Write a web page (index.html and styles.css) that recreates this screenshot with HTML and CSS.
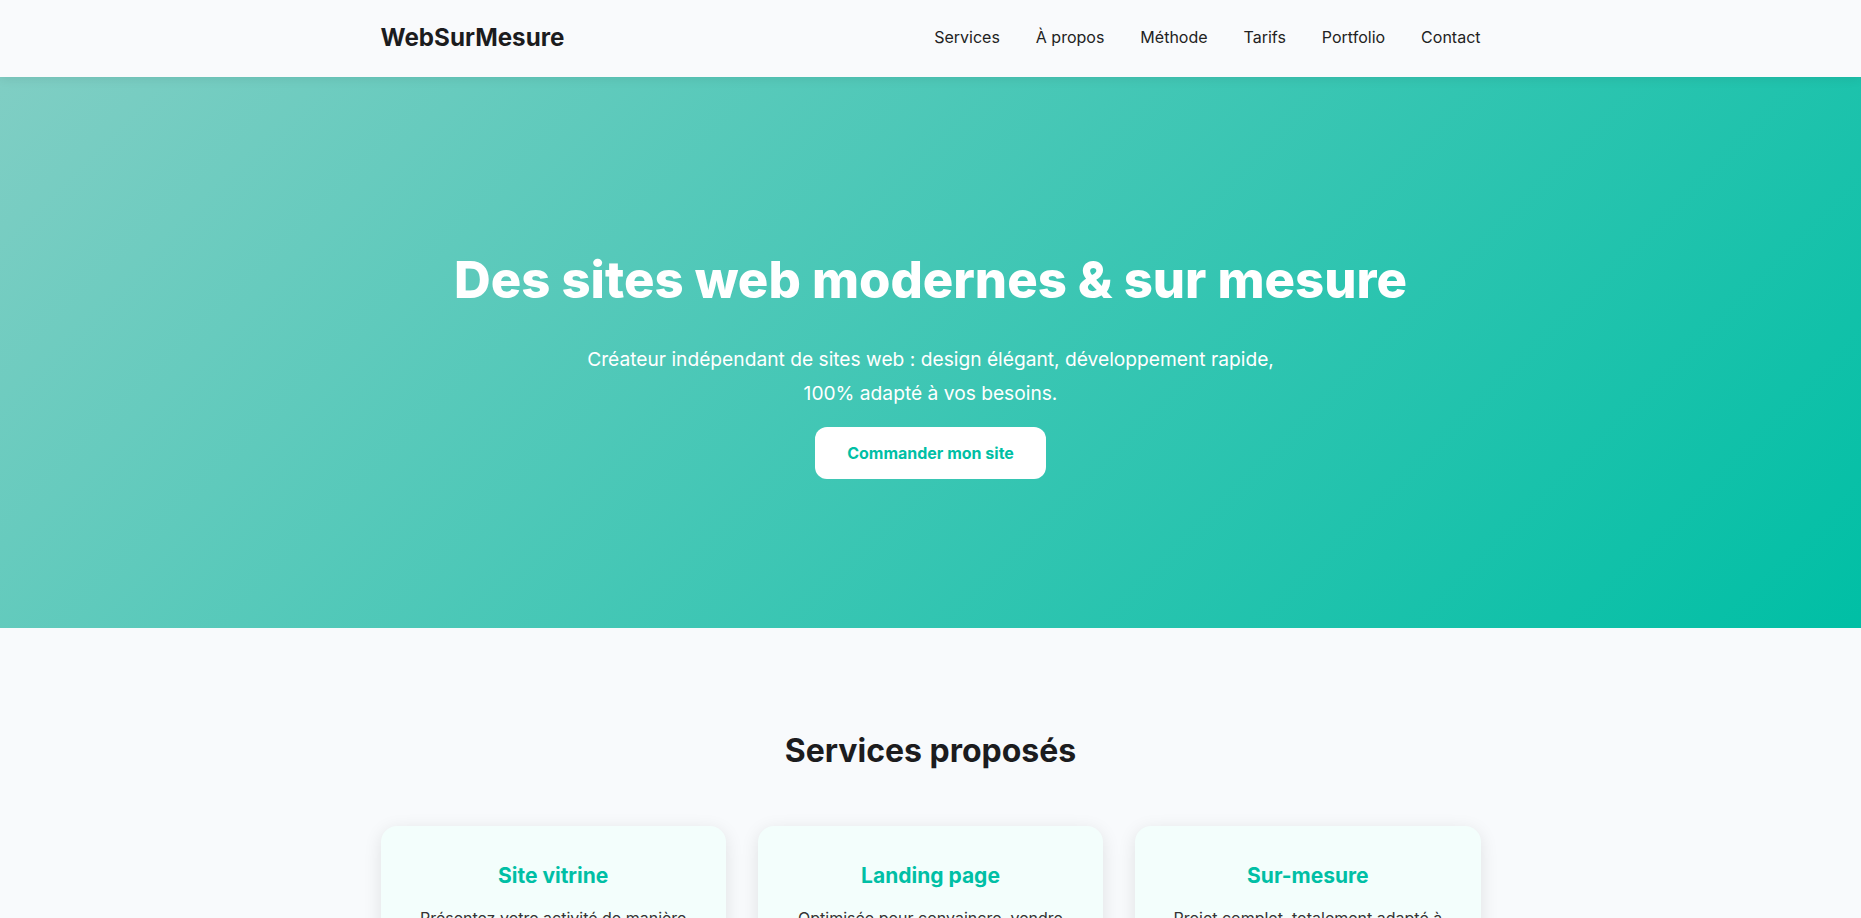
FILE: index.html
```html
<!DOCTYPE html>
<html lang="fr">
<head>
<meta charset="utf-8">
<title>WebSurMesure</title>
<link rel="stylesheet" href="styles.css">
</head>
<body>
<header class="site-header">
  <div class="container header-inner">
    <div class="logo">WebSurMesure</div>
    <nav class="nav">
      <a href="#">Services</a>
      <a href="#">À propos</a>
      <a href="#">Méthode</a>
      <a href="#">Tarifs</a>
      <a href="#">Portfolio</a>
      <a href="#">Contact</a>
    </nav>
  </div>
</header>
<section class="hero">
  <h1 class="hero-title">Des sites web modernes &amp; sur mesure</h1>
  <p class="hero-sub">Créateur indépendant de sites web : design élégant, développement rapide, 100% adapté à vos besoins.</p>
  <a class="hero-btn" href="#">Commander mon site</a>
</section>
<section class="services">
  <div class="container">
    <h2 class="section-title">Services proposés</h2>
    <div class="cards">
      <div class="card">
        <h3 class="card-title">Site vitrine</h3>
        <p class="card-text">Présentez votre activité de manière professionnelle et élégante sur le web.</p>
      </div>
      <div class="card">
        <h3 class="card-title">Landing page</h3>
        <p class="card-text">Optimisée pour convaincre, vendre efficacement et capter des prospects.</p>
      </div>
      <div class="card">
        <h3 class="card-title">Sur-mesure</h3>
        <p class="card-text">Projet complet, totalement adapté à vos besoins spécifiques et à votre image.</p>
      </div>
    </div>
  </div>
</section>
</body>
</html>
```
FILE: styles.css
```css
* { box-sizing: border-box; }
html, body { margin: 0; padding: 0; }
body {
  font-family: Inter, "Noto Sans", sans-serif;
  background: #f8fafc;
  color: #1e1e1e;
}
.container {
  max-width: 1100px;
  margin: 0 auto;
}
.site-header {
  position: relative;
  z-index: 2;
  background: #f9fafc;
  box-shadow: 0 2px 10px rgba(0,0,0,0.08);
}
.header-inner {
  height: 77px;
  padding-bottom: 3px;
  display: flex;
  align-items: center;
  justify-content: space-between;
}
.logo {
  font-size: 24.2px;
  font-weight: 700;
  color: #1c1c1e;
}
.nav {
  display: flex;
  gap: 36px;
}
.nav a {
  color: #222;
  text-decoration: none;
  font-size: 16px;
}
.hero {
  background: linear-gradient(135deg, #80cec4 0%, #00bfa5 100%);
  color: #fff;
  text-align: center;
  padding: 173px 20px 149px;
  display: flex;
  flex-direction: column;
  align-items: center;
}
.hero-title {
  margin: 0 0 33px;
  font-size: 50.8px;
  line-height: 60px;
  font-weight: 800;
}
.hero-sub {
  margin: 0 0 17px;
  max-width: 700px;
  font-size: 19.2px;
  line-height: 1.75;
}
.hero-btn {
  display: inline-block;
  background: #fff;
  color: #00bfa5;
  font-weight: 700;
  font-size: 16px;
  line-height: 20px;
  padding: 16px 32px;
  border-radius: 12px;
  text-decoration: none;
}
.services {
  padding: 104px 0 80px;
}
.section-title {
  margin: 0 0 56px;
  text-align: center;
  font-size: 32px;
  line-height: 38px;
  font-weight: 700;
  color: #1c1c1e;
}
.cards {
  display: grid;
  grid-template-columns: repeat(3, 1fr);
  gap: 32px;
}
.card {
  background: #f3fefc;
  border-radius: 16px;
  padding: 34px 32px 32px;
  text-align: center;
  box-shadow: 0 4px 18px rgba(0,0,0,0.1);
}
.card-title {
  margin: 0 0 15px;
  color: #00bfa5;
  font-size: 21px;
  line-height: 31px;
  font-weight: 700;
}
.card-text {
  margin: 0;
  font-size: 16px;
  line-height: 1.6;
  color: #333;
}
```
